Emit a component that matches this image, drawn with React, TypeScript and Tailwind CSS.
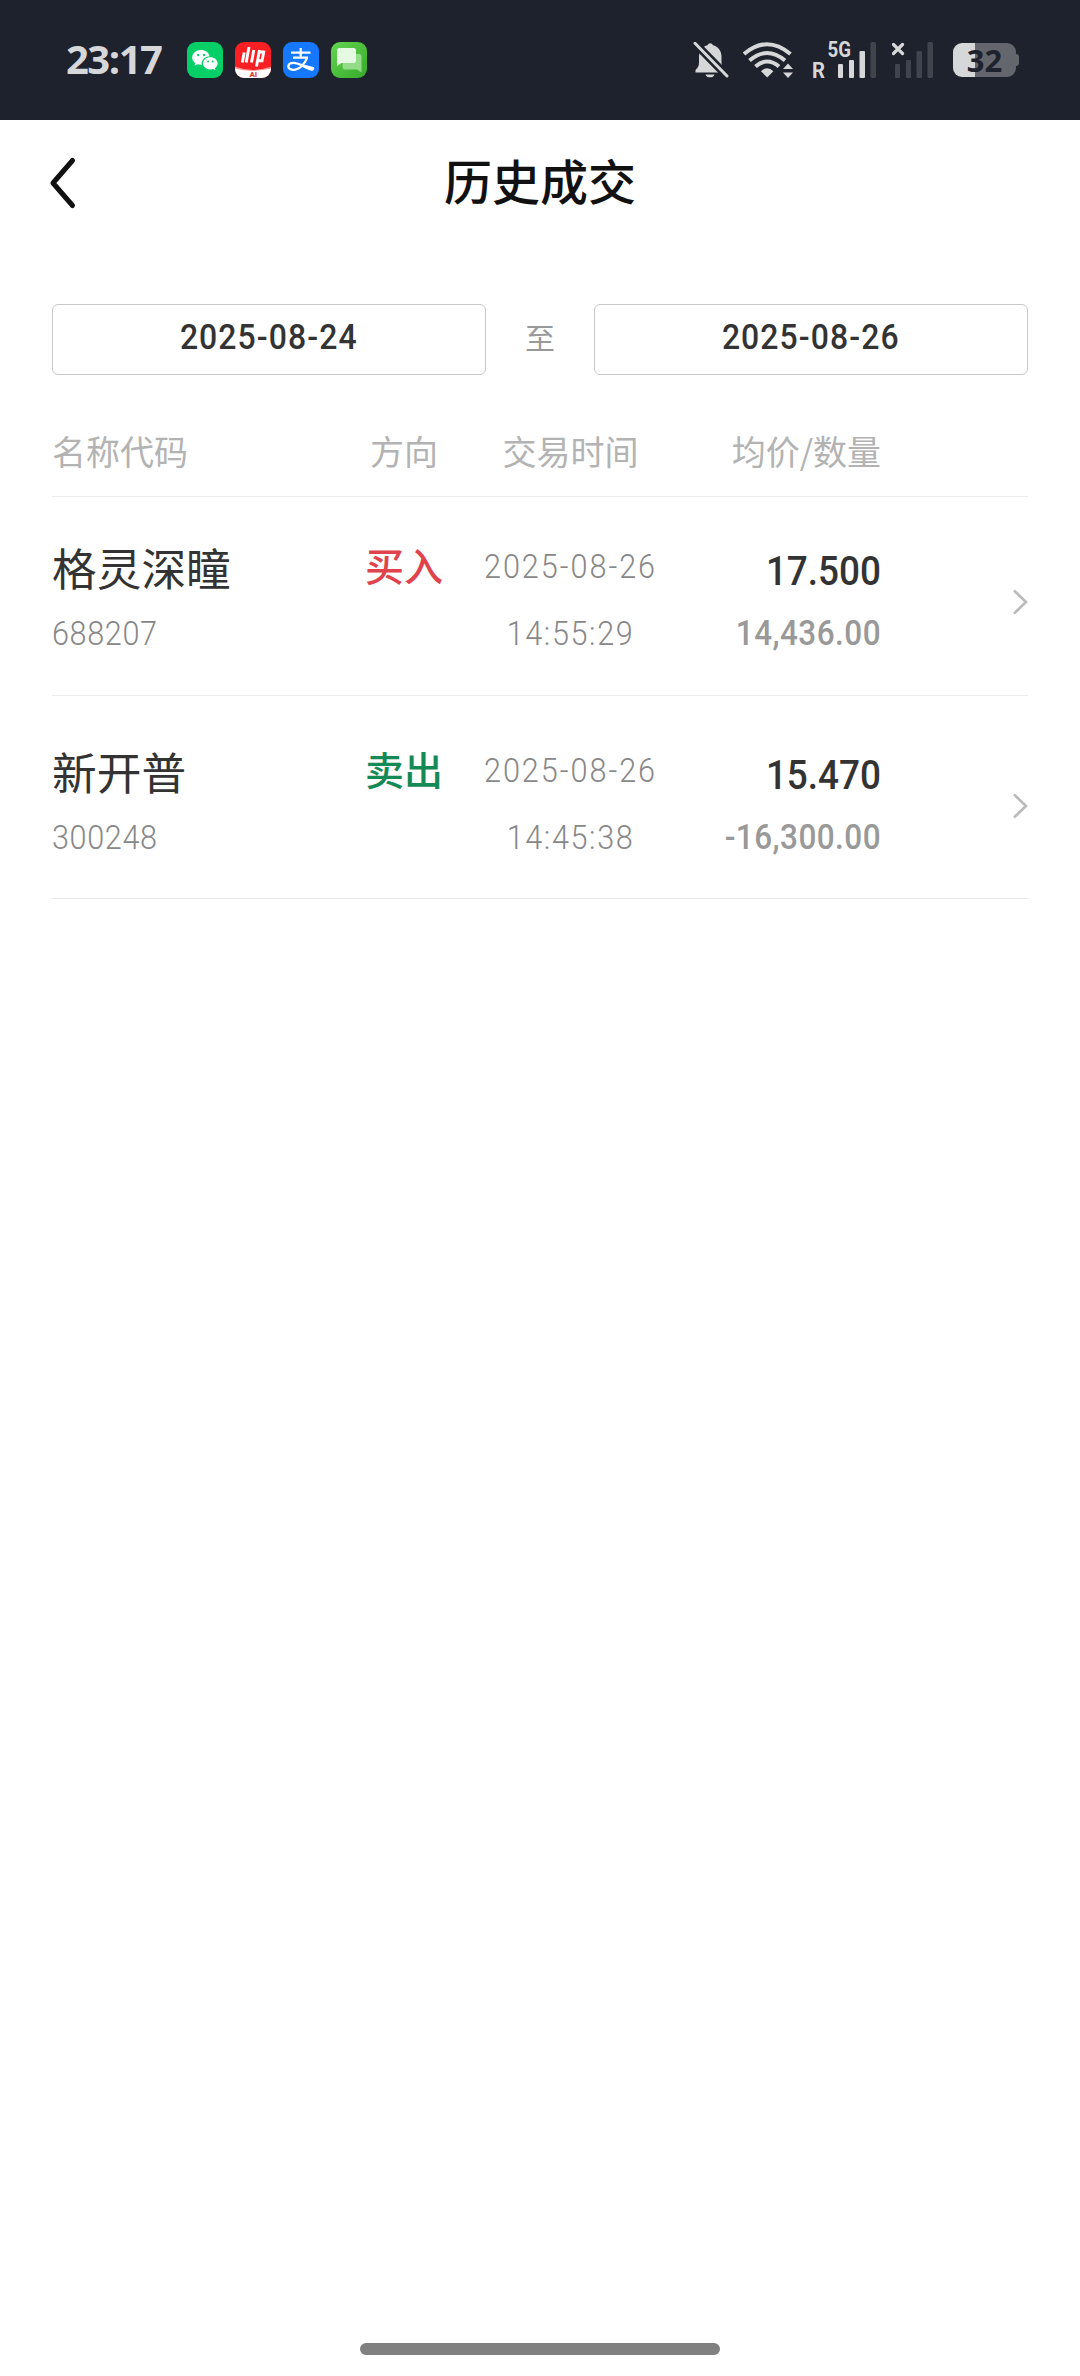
// Trade history page — executed orders within a date range

import { useState } from 'react'

interface Deal {
  name: string; code: string; side: 'buy' | 'sell'
  date: string; time: string; price: string; amount: string
}

const DEALS: Deal[] = [
  { name: '格灵深瞳', code: '688207', side: 'buy', date: '2025-08-26', time: '14:55:29', price: '17.500', amount: '14,436.00' },
  { name: '新开普', code: '300248', side: 'sell', date: '2025-08-26', time: '14:45:38', price: '15.470', amount: '-16,300.00' },
]

function WechatIcon() {
  return (
    <svg width="36" height="36" viewBox="0 0 36 36">
      <rect width="36" height="36" rx="9" fill="#07cf68" />
      <path d="M14 8C9 8 5.2 11.3 5.2 15.4c0 2.300 1.200 4.300 3.100 5.700l-.8 2.600 3-1.500c1.100.3 2.300.5 3.500.5l.8 0c-.9-4.700 3.300-8.500 7.800-8.500C22 10.600 18.400 8 14 8z" fill="#fff" />
      <path d="M23.300 15.200c-4.100 0-7.300 2.700-7.300 6.100s3.200 6.100 7.300 6.100c1 0 1.900-.1 2.700-.4l2.500 1.300-.7-2.100c1.700-1.200 2.800-2.900 2.800-4.900 0-3.400-3.200-6.100-7.300-6.100z" fill="#fff" />
      <g fill="#07cf68">
        <circle cx="11.200" cy="13" r="1.200" /><circle cx="17" cy="13" r="1.200" />
        <circle cx="21" cy="19.600" r="1" /><circle cx="25.800" cy="19.600" r="1" />
      </g>
    </svg>
  )
}

function BrokerIcon() {
  return (
    <svg width="36" height="36" viewBox="0 0 36 36">
      <clipPath id="broker"><rect width="36" height="36" rx="9" /></clipPath>
      <g clipPath="url(#broker)">
        <rect width="36" height="36" fill="#fa1f23" />
        <path d="M0 25.500Q18 31 36 25.500V36H0z" fill="#fff" />
        <path d="M0 24.500Q18 31.500 36 24.500V26.500Q18 31 0 26.500z" fill="#fd8f8c" />
        <g stroke="#fff" strokeWidth="2.900" fill="none">
          <path d="M9.200 10.500L7.300 20.500M14 5L11.200 20.500M18.800 8L16.500 20.500M29 8.500L26.800 20M24.500 8L21.500 24.500M22 18.800H28M24 10H29" />
        </g>
        <text x="18.300" y="34.500" textAnchor="middle" fontSize="8" fontWeight="700" fontFamily="Roboto, sans-serif" fill="#e52a2a">AI</text>
      </g>
    </svg>
  )
}

function AlipayIcon() {
  return (
    <svg width="36" height="36" viewBox="0 0 36 36">
      <rect width="36" height="36" rx="9" fill="#1677ff" />
      <g stroke="#fff" strokeWidth="2.300" fill="none">
        <path d="M8 10.600H27.500M17.700 6V15.500M10 15.600H25" />
        <path d="M24.200 15.500C22.500 21 17 27.800 10 27.800C3.500 27.800 4 20.800 10.500 20.800C16 20.800 22 25.500 31 27" />
      </g>
      <path d="M20 22.500L31.200 25.300L29.500 29C25.500 28 22.500 26.500 18.500 24.500z" fill="#fff" />
    </svg>
  )
}

function MessagesIcon() {
  return (
    <svg width="36" height="36" viewBox="0 0 36 36">
      <defs>
        <linearGradient id="msg" x1="0" y1="0" x2="1" y2="1">
          <stop offset="0" stopColor="#62d64f" /><stop offset="1" stopColor="#37a92c" />
        </linearGradient>
      </defs>
      <rect width="36" height="36" rx="9" fill="url(#msg)" />
      <path d="M12 12h16a2.500 2.500 0 0 1 2.500 2.500V30.500L26 27.500H14a2.500 2.500 0 0 1-2.500-2.500z" fill="#93dc88" />
      <path d="M8.500 6H22.500a2.500 2.500 0 0 1 2.500 2.500V18.500a2.500 2.500 0 0 1-2.500 2.500H10.500L6 24V8.500a2.500 2.500 0 0 1 2.500-2.500z" fill="#e6f9e2" />
    </svg>
  )
}

function StatusBar() {
  return (
    <div className="flex h-[120px] items-center bg-[#1e222c] pl-[66px] pr-[61px] text-[#d6d7d9]">
      <span className="w-[121px] -translate-y-[2px] font-['Open_Sans',sans-serif] text-[40px] leading-[41px] font-bold tracking-[-1.500px]">23:17</span>
      <div className="flex flex-1 gap-3">
        <WechatIcon />
        <BrokerIcon />
        <AlipayIcon />
        <MessagesIcon />
      </div>

      {/* Muted bell */}
      <svg width="36" height="36" viewBox="0 0 36 36" fill="none" className="mr-[13px]">
        <path d="M2.500 30.500V28C5.500 25.500 6 23 6 20V15C6 8.500 9.500 4.500 14.500 3.200C15.500 .5 19 .5 20 3.200C25 4.500 28.500 8.500 28.500 14.500v6C28.500 24 29.500 26 32 28.500V30.500z" fill="#d6d7d9" />
        <path d="M12.500 32.500h9c-1 3.800-8 3.800-9 0z" fill="#d6d7d9" />
        <path d="M2 1.200L34 34" stroke="#1e222c" strokeWidth="8" />
        <path d="M2 1.200L34 34" stroke="#d6d7d9" strokeWidth="3" strokeLinecap="round" />
      </svg>

      {/* Wifi */}
      <svg width="52" height="36" viewBox="0 0 52 36" fill="none" className="mr-[18px]">
        <g stroke="#d6d7d9" strokeWidth="4">
          <path d="M2 12Q25 -7.500 48.500 12" />
          <path d="M7.500 18.500Q25 3.500 43 18.500" />
          <path d="M13.500 24.500Q25 14.500 37 24.500" />
        </g>
        <path d="M25.200 35.500L19 29.200Q25.200 23.500 31.400 29.200z" fill="#d6d7d9" />
        <path d="M41 27L46 21.500L51 27zM41 30.500H51L46 36z" fill="#d6d7d9" />
      </svg>

      {/* SIM 1 */}
      <svg width="64" height="38" viewBox="0 0 64 38" className="mr-[16px] -translate-y-px overflow-visible" fill="#d6d7d9" fontFamily="Roboto, sans-serif" fontWeight="700">
        <text x="0" y="37.500" fontSize="21.500" textLength="13" lengthAdjust="spacingAndGlyphs">R</text>
        <text x="15.500" y="16.500" fontSize="22" textLength="23.500" lengthAdjust="spacingAndGlyphs">5G</text>
        <rect x="26" y="24" width="5" height="14" rx="1" />
        <rect x="37" y="20" width="5" height="18" rx="1" />
        <rect x="47.500" y="11" width="5.500" height="27" rx="1" />
        <rect x="58.500" y="2" width="5.500" height="36" rx="1.500" fill="#40444d" />
      </svg>

      {/* SIM 2, no service */}
      <svg width="42" height="38" viewBox="0 0 42 38" className="mr-[19px] -translate-y-px" fill="#40444d">
        <path d="M1.500 4.500L10.500 13.500M10.500 4.500L1.500 13.500" stroke="#d6d7d9" strokeWidth="3.200" strokeLinecap="round" />
        <rect x="3" y="24" width="5" height="14" rx="1" />
        <rect x="14" y="20" width="5" height="18" rx="1" />
        <rect x="24.500" y="11" width="5.500" height="27" rx="1" />
        <rect x="35.500" y="2" width="5.500" height="36" rx="1.500" />
      </svg>

      {/* Battery */}
      <div className="flex items-center">
        <div className="flex h-[34px] w-[63px] items-center justify-center rounded-[9px] bg-[linear-gradient(to_right,#d6d7d9_22px,#63666d_22px)] font-['Open_Sans',sans-serif] text-[31px] leading-none font-bold text-[#1e222c]">32</div>
        <div className="h-3 w-[3px] rounded-r-sm bg-[#63666d]" />
      </div>
    </div>
  )
}

function DealRow({ deal }: { deal: Deal }) {
  return (
    <div className="flex h-[199px] border-b border-[#ebebeb] last:h-[203px] last:pt-[5px]">
      <div className="w-[290px] pt-[45px]">
        <p className="text-[44.700px] leading-[50px] text-[#333]">{deal.name}</p>
        <p className="mt-[21px] origin-left scale-x-[0.9] font-['Roboto',sans-serif] text-[34px] leading-[40px] font-light tracking-[0.700px] text-[#888]">{deal.code}</p>
      </div>
      <div className="w-[124px] pt-[45px] text-center text-[39px] leading-[44px] font-medium">
        {deal.side === 'buy' ? <p className="text-[#e0434c]">买入</p> : <p className="text-[#158a56]">卖出</p>}
      </div>
      <div className="w-[209px] scale-x-[0.9] pt-[49px] text-center font-['Roboto',sans-serif] text-[34px] leading-[40px] font-light text-[#888]">
        <p className="tracking-[2.200px]">{deal.date}</p>
        <p className="mt-[27px] tracking-[1.800px]">{deal.time}</p>
      </div>
      <div className="w-[206px] origin-right scale-x-[0.9] pt-[50px] text-right font-['Roboto',sans-serif] font-medium">
        <p className="text-[41px] leading-[48px] text-[#333]">{deal.price}</p>
        <p className="mt-[19px] text-[35px] leading-[40px] tracking-[0.500px] text-[#999]">{deal.amount}</p>
      </div>
      <svg width="16" height="26" viewBox="0 0 16 26" className="mt-[92px] ml-auto" fill="none" stroke="#bbb" strokeWidth="2.600">
        <path d="M2 1.500L14 13L2 24.500" />
      </svg>
    </div>
  )
}

function DateField({ value }: { value: string }) {
  return (
    <button className="h-[71px] w-[434px] rounded-[6px] border border-[#c8c8c8] pb-[3px] font-['Roboto',sans-serif] text-[35.500px] font-medium text-[#333]">
      <span className="inline-block scale-x-[0.9] tracking-[1.200px]">{value}</span>
    </button>
  )
}

export default function App() {
  const [from] = useState('2025-08-24')
  const [to] = useState('2025-08-26')

  return (
    <div className="flex h-[2376px] w-[1080px] flex-col bg-white font-['Noto_Sans_CJK_SC',sans-serif]">
      <StatusBar />

      {/* Title bar */}
      <header className="grid h-[126px] grid-cols-[200px_1fr_200px] items-center">
        <svg width="28" height="54" viewBox="0 0 28 54" className="ml-[49px]" fill="none" stroke="#111" strokeWidth="5" strokeLinecap="round" strokeLinejoin="round">
          <path d="M23.500 4.500L4 27L23.500 49.500" />
        </svg>
        <h1 className="pb-[9px] text-center text-[48px] leading-[60px] font-medium text-[#111]">历史成交</h1>
      </header>

      <main className="px-[52px] pt-[58px]">
        {/* Date range */}
        <div className="flex items-center text-center">
          <DateField value={from} />
          <span className="flex-1 pb-[7px] text-[30px] leading-[40px] text-[#999]">至</span>
          <DateField value={to} />
        </div>

        <div className="flex h-[122px] border-b border-[#ebebeb] pt-[51px] text-[34px] leading-[50px] text-[#b3b3b3]">
          <span className="w-[290px]">名称代码</span>
          <span className="w-[124px] text-center">方向</span>
          <span className="w-[209px] text-center">交易时间</span>
          <span className="w-[206px] text-right">均价/数量</span>
        </div>

        {DEALS.map(d => <DealRow key={d.code} deal={d} />)}
      </main>

      {/* Home indicator */}
      <div className="mx-auto mt-auto mb-[21px] h-3 w-[360px] rounded-full bg-[#808080]" />
    </div>
  )
}
